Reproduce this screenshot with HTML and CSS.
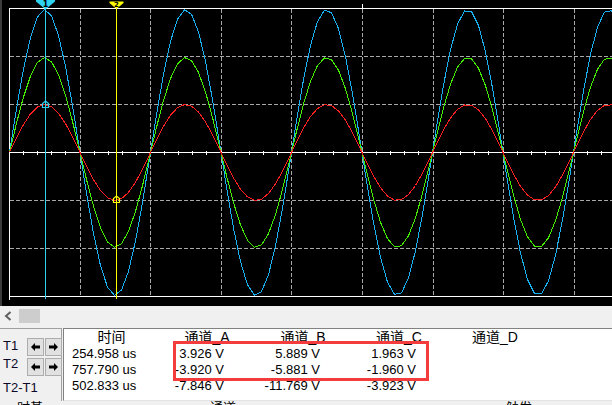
FILE: index.html
```html
<!DOCTYPE html>
<html lang="zh-CN">
<head>
<meta charset="utf-8">
<title>示波器</title>
<link rel="stylesheet" href="styles.css">
</head>
<body>
<div class="scope">
  <svg id="plot" width="612" height="306" viewBox="0 0 612 306">
    <rect class="edge" x="0" y="0" width="2" height="306"/>
    <g class="grid">
      <line x1="80.5" y1="9" x2="80.5" y2="296"/>
      <line x1="150.5" y1="9" x2="150.5" y2="296"/>
      <line x1="221.5" y1="9" x2="221.5" y2="296"/>
      <line x1="291.5" y1="9" x2="291.5" y2="296"/>
      <line x1="362.5" y1="9" x2="362.5" y2="296"/>
      <line x1="433.5" y1="9" x2="433.5" y2="296"/>
      <line x1="503.5" y1="9" x2="503.5" y2="296"/>
      <line x1="574.5" y1="9" x2="574.5" y2="296"/>
      <line x1="10" y1="56.5" x2="612" y2="56.5"/>
      <line x1="10" y1="104.5" x2="612" y2="104.5"/>
      <line x1="10" y1="200.5" x2="612" y2="200.5"/>
      <line x1="10" y1="248.5" x2="612" y2="248.5"/>
    </g>
    <g class="frame">
      <line x1="9.5" y1="8" x2="9.5" y2="300"/>
      <line x1="9" y1="8.5" x2="612" y2="8.5"/>
      <line x1="9" y1="296.5" x2="612" y2="296.5"/>
      <line x1="9" y1="152.5" x2="612" y2="152.5"/>
      <line x1="362.5" y1="4" x2="362.5" y2="8"/>
    </g>
    <g id="ticks" class="frame"></g>
    <g id="waves"></g>
    <g class="cursor c1">
      <line x1="45.5" y1="8" x2="45.5" y2="299"/>
      <polygon class="flag" points="36,0 55,0 55,1.5 45.5,9.5 36,1.5"/>
      <text class="cur-num" x="45.5" y="6.5">1</text>
      <polygon class="pt" points="42.5,107.5 42.5,103.5 45.5,101 48.5,103.5 48.5,107.5"/>
    </g>
    <g class="cursor c2">
      <line x1="116.5" y1="8" x2="116.5" y2="299"/>
      <polygon class="flag" points="109.5,1.5 123.5,1.5 123.5,3 116.5,9 109.5,3"/>
      <text class="cur-num small" x="116.5" y="7">2</text>
      <polygon class="pt" points="113.5,202.5 113.5,198.5 116.5,196 119.5,198.5 119.5,202.5"/>
    </g>
  </svg>
</div>

<div class="hscroll">
  <svg class="chev" width="8" height="10" viewBox="0 0 8 10">
    <polyline points="6.5,1 2,5 6.5,9"/>
  </svg>
  <div class="thumb"></div>
</div>

<div class="panel">
  <div class="cursors">
    <span class="lbl">T1</span>
    <span class="btn"><svg class="arr" width="9" height="8" viewBox="0 0 9 8"><path d="M0 4 L4 0 V2.5 H9 V5.5 H4 V8 Z"/></svg></span>
    <span class="btn"><svg class="arr" width="9" height="8" viewBox="0 0 9 8"><path d="M9 4 L5 0 V2.5 H0 V5.5 H5 V8 Z"/></svg></span>
    <span class="lbl lbl2">T2</span>
    <span class="btn"><svg class="arr" width="9" height="8" viewBox="0 0 9 8"><path d="M0 4 L4 0 V2.5 H9 V5.5 H4 V8 Z"/></svg></span>
    <span class="btn"><svg class="arr" width="9" height="8" viewBox="0 0 9 8"><path d="M9 4 L5 0 V2.5 H0 V5.5 H5 V8 Z"/></svg></span>
    <span class="lbl diff">T2-T1</span>
  </div>
  <div class="table">
    <span class="th">时间</span>
    <span class="th">通道_A</span>
    <span class="th">通道_B</span>
    <span class="th">通道_C</span>
    <span class="th">通道_D</span>

    <span class="t">254.958 us</span>
    <span class="v">3.926 V</span>
    <span class="v">5.889 V</span>
    <span class="v">1.963 V</span>
    <span class="v"></span>

    <span class="t">757.790 us</span>
    <span class="v">-3.920 V</span>
    <span class="v">-5.881 V</span>
    <span class="v">-1.960 V</span>
    <span class="v"></span>

    <span class="t">502.833 us</span>
    <span class="v">-7.846 V</span>
    <span class="v">-11.769 V</span>
    <span class="v">-3.923 V</span>
    <span class="v"></span>
  </div>
  <div class="mark"></div>
</div>

<div class="groups">
  <span>时基</span>
  <span>通道</span>
  <span>触发</span>
</div>

<script src="app.js"></script>
</body>
</html>
```

FILE: styles.css
```css
* { box-sizing: border-box; }
html, body { margin: 0; padding: 0; }
body {
  width: 612px;
  height: 405px;
  overflow: hidden;
  background: #f0f0f0;
  font-family: "Liberation Sans", "Noto Sans CJK SC", sans-serif;
  font-size: 13px;
  color: #000;
}

/* ---------- scope canvas ---------- */
.scope { height: 306px; background: #000; }
.scope svg { display: block; }
.edge { fill: #3c3c3c; }
.grid line { stroke: #a8a8a8; stroke-width: 1; stroke-dasharray: 4 2; shape-rendering: crispEdges; }
.frame line { stroke: #fff; stroke-width: 1; shape-rendering: crispEdges; }
.wave { fill: none; stroke-width: 1; shape-rendering: crispEdges; }
.wave-a { stroke: #44ee00; }
.wave-b { stroke: #18b2f2; }
.wave-c { stroke: #ff2020; }

.cursor line { stroke-width: 1; shape-rendering: crispEdges; }
.cursor .pt { fill: none; stroke-width: 1.2; }
.c1 line { stroke: #2ed3f0; }
.c1 .flag { fill: #2ed3f0; }
.c1 .pt { stroke: #2ed3f0; }
.c2 line { stroke: #ffff00; }
.c2 .flag { fill: #ffff00; }
.c2 .pt { stroke: #ffff00; }
.cur-num {
  font-family: "DejaVu Sans", sans-serif;
  font-weight: bold;
  font-size: 8px;
  fill: #000;
  text-anchor: middle;
}
.cur-num.small { font-size: 7px; }

/* ---------- horizontal scrollbar ---------- */
.hscroll {
  height: 19px;
  display: flex;
  align-items: center;
  padding-left: 4px;
}
.chev polyline { fill: none; stroke: #606060; stroke-width: 2; }
.thumb {
  width: 21px;
  height: 14px;
  margin-left: 7px;
  background: #cdcdcd;
}

/* ---------- bottom panel ---------- */
.panel {
  position: relative;
  display: flex;
  height: 73px;
  margin-top: 3px;
}
.cursors {
  width: 62px;
  border-top: 1px solid #a0a0a0;
  border-right: 1px solid #a0a0a0;
  padding: 9px 0 0 3px;
  display: grid;
  grid-template-columns: 23px 17px 17px;
  grid-template-rows: 18px 18px auto;
  column-gap: 1px;
  row-gap: 2px;
  align-content: start;
}
.lbl { line-height: 16px; color: #0c0828; }
.lbl2 { margin-top: -2px; }
.diff { grid-column: 1 / -1; margin-top: 2px; }
.btn {
  background: #e1e1e1;
  border: 1px solid #adadad;
  display: flex;
  align-items: center;
  justify-content: center;
}
.arr { display: block; }
.arr path { fill: #000; }

.table {
  flex: 1;
  margin-left: 1px;
  background: #fff;
  border-top: 1px solid #828282;
  border-left: 1px solid #828282;
  border-bottom: 1px solid #e3e3e3;
  display: grid;
  grid-template-columns: 95px 96px 96px 96px 96px;
  grid-template-rows: 17px;
  grid-auto-rows: 16px;
  align-content: start;
  white-space: nowrap;
}
.th { text-align: center; font-size: 14px; line-height: 17px; }
.t { padding-left: 8px; line-height: 16px; }
.v { text-align: right; padding-right: 31px; line-height: 16px; }

.mark {
  position: absolute;
  left: 173px;
  top: 13px;
  width: 256px;
  height: 40px;
  border: 3px solid #f43c3c;
}

/* ---------- group labels (cut off) ---------- */
.groups {
  display: grid;
  grid-template-columns: 193px 296px 1fr;
  padding: 0 0 0 17px;
  line-height: 13px;
  font-size: 13px;
}
```

FILE: app.js
```js
(function () {
  var NS = 'http://www.w3.org/2000/svg';
  var waves = document.getElementById('waves');
  var ticks = document.getElementById('ticks');
  var X0 = 9.5, MID = 152.5, PERIOD = 141, STEP = 7;
  var channels = [
    { cls: 'wave wave-b', amp: 143 },
    { cls: 'wave wave-a', amp: 95 },
    { cls: 'wave wave-c', amp: 48 }
  ];
  channels.forEach(function (ch) {
    var pts = [];
    for (var x = X0; x <= 620; x += STEP) {
      var y = MID - ch.amp * Math.sin(2 * Math.PI * (x - X0) / PERIOD);
      pts.push(x.toFixed(1) + ',' + y.toFixed(1));
    }
    var p = document.createElementNS(NS, 'polyline');
    p.setAttribute('points', pts.join(' '));
    p.setAttribute('class', ch.cls);
    waves.appendChild(p);
  });
  for (var k = 1; k < 43; k++) {
    var tx = Math.floor(X0 + 14.1 * k) + 0.5;
    var l = document.createElementNS(NS, 'line');
    l.setAttribute('x1', tx);
    l.setAttribute('x2', tx);
    l.setAttribute('y1', 151);
    l.setAttribute('y2', 155);
    ticks.appendChild(l);
  }
})();
```
